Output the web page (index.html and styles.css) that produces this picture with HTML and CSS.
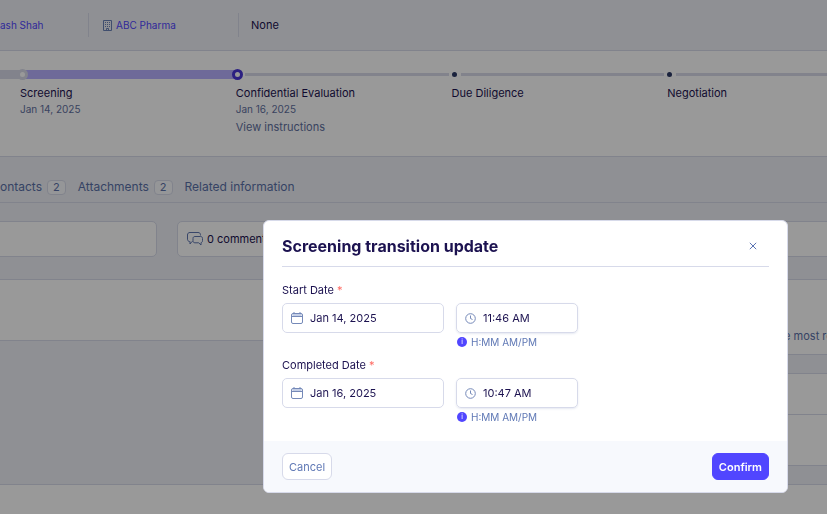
FILE: index.html
```html
<!DOCTYPE html>
<html lang="en">
<head>
  <meta charset="UTF-8"/>
  <meta name="viewport" content="width=device-width, initial-scale=1.0"/>
  <title>Screening transition update</title>
  <link rel="stylesheet" href="styles.css">
</head>
<body>
  <header class="deal-header">
    <div class="deal-item owner"><a href="#">ash Shah</a></div>
    <div class="deal-item company">
      <svg width="9" height="11" viewBox="0 0 9 11" fill="none" stroke="#6b82b8">
        <path d="M.5.5h8v10h-8z"/>
        <path d="M2 2.5h1M4 2.5h1M6 2.5h1M2 4.5h1M4 4.5h1M6 4.5h1M2 6.5h1M4 6.5h1M6 6.5h1"/>
        <path d="M3.5 10.500v-2h2v2"/>
      </svg>
      <a href="#">ABC Pharma</a>
    </div>
    <div class="deal-item">None</div>
  </header>

  <section class="stepper">
    <div class="steps">
      <div class="step done">
        <span class="dot"></span>
        <h4>Screening</h4>
        <p>Jan 14, 2025</p>
      </div>
      <div class="step current">
        <span class="dot"></span>
        <h4>Confidential Evaluation</h4>
        <p>Jan 16, 2025</p>
        <a href="#">View instructions</a>
      </div>
      <div class="step">
        <span class="dot"></span>
        <h4>Due Diligence</h4>
      </div>
      <div class="step">
        <span class="dot"></span>
        <h4>Negotiation</h4>
      </div>
    </div>
  </section>

  <nav class="tabs">
    <a href="#">ontacts <span class="count">2</span></a>
    <a href="#">Attachments <span class="count">2</span></a>
    <a href="#">Related information</a>
  </nav>

  <div class="cards">
    <div class="card"></div>
    <div class="card comments">
      <svg width="16" height="14" viewBox="0 0 16 14" fill="none" stroke="#5f76b0" stroke-linejoin="round">
        <path d="M5.500 9.500H5L3 12V9.500H2.500C1.200 9.300.500 8.500.500 7.200V3C.500 1.400 1.400.500 3 .500h8c1.600 0 2.500.900 2.500 2.200v.800"/>
        <path d="M8 4.500h5.500c1.300 0 2 .700 2 2v2.200c0 1.200-.600 1.800-1.500 2v2.300l-2.300-2.200H8c-1.300 0-2-.700-2-2V6.500c0-1.300.700-2 2-2z"/>
      </svg>
      <span>0 comments</span>
    </div>
  </div>

  <main class="content">
    <div class="left-col">
      <div class="panel"></div>
    </div>
    <div class="right-col">
      <div class="panel summary"><p>the most recent</p></div>
      <div class="panel list">
        <div class="row"></div>
        <div class="row"></div>
      </div>
    </div>
  </main>
  <div class="panel bottom"></div>

  <div class="overlay">
    <form class="modal" role="dialog" aria-labelledby="modalTitle">
      <div class="modal-body">
        <div class="modal-header">
          <h2 id="modalTitle">Screening transition update</h2>
          <button type="button" class="close-btn" aria-label="Close">
            <svg width="8" height="8" viewBox="0 0 8 8" stroke="#5b74b4"><path d="M.8.8l6.400 6.400M7.200.8L.8 7.200"/></svg>
          </button>
        </div>

        <div class="form-group">
          <label for="startDate">Start Date <span class="required">*</span></label>
          <div class="fields">
            <div class="field date">
              <svg width="12" height="12" viewBox="0 0 12 12" fill="none" stroke="#7589b8">
                <path d="M1.500 2h9v2h-9z" fill="#c3cee6" stroke="none"/>
                <rect x=".5" y="1.500" width="11" height="10" rx="1.500"/><path d="M.5 4.500h11M3 0v2M9 0v2"/>
              </svg>
              <input type="text" id="startDate" value="Jan 14, 2025">
            </div>
            <div class="field time">
              <svg width="11" height="11" viewBox="0 0 11 11" fill="none" stroke="#7589b8">
                <circle cx="5.500" cy="5.500" r="4.800"/><path d="M5.500 2.500v3l2 1"/>
              </svg>
              <input type="text" id="startTime" aria-label="Start time" value="11:46 AM">
            </div>
          </div>
          <p class="hint"><span class="info">i</span>H:MM AM/PM</p>
        </div>

        <div class="form-group">
          <label for="endDate">Completed Date <span class="required">*</span></label>
          <div class="fields">
            <div class="field date">
              <svg width="12" height="12" viewBox="0 0 12 12" fill="none" stroke="#7589b8">
                <path d="M1.500 2h9v2h-9z" fill="#c3cee6" stroke="none"/>
                <rect x=".5" y="1.500" width="11" height="10" rx="1.500"/><path d="M.5 4.500h11M3 0v2M9 0v2"/>
              </svg>
              <input type="text" id="endDate" value="Jan 16, 2025">
            </div>
            <div class="field time">
              <svg width="11" height="11" viewBox="0 0 11 11" fill="none" stroke="#7589b8">
                <circle cx="5.500" cy="5.500" r="4.800"/><path d="M5.500 2.500v3l2 1"/>
              </svg>
              <input type="text" id="endTime" aria-label="Completed time" value="10:47 AM">
            </div>
          </div>
          <p class="hint"><span class="info">i</span>H:MM AM/PM</p>
        </div>
      </div>

      <div class="modal-footer">
        <button type="button" class="cancel-btn">Cancel</button>
        <button type="submit" class="confirm-btn">Confirm</button>
      </div>
    </form>
  </div>
</body>
</html>
```
FILE: styles.css
```css
* { box-sizing: border-box; margin: 0; padding: 0; }
body {
  display: flex;
  flex-direction: column;
  min-height: 100vh;
  font-family: Inter, 'Open Sans', sans-serif;
  font-size: 11px;
  line-height: 16px;
  color: #1c1250;
  background-color: #eef1f7;
  overflow-x: hidden;
}
a { text-decoration: none; }
svg { flex: none; }

.deal-header {
  display: flex;
  align-items: center;
  height: 51px;
  border-bottom: 1px solid #d7daea;
}
.deal-item {
  display: flex;
  align-items: center;
  gap: 4px;
  height: 24px;
  padding-left: 12px;
}
.deal-item a {
  font-size: 10px;
  color: #5146ff;
}
.owner {
  width: 89px;
  padding-left: 0;
  border-right: 1px solid #d7daea;
}
.company {
  width: 150px;
  padding-left: 14px;
  border-right: 1px solid #d7daea;
}

.stepper {
  height: 106px;
  padding: 18px 0 0 20px;
  background: #fff;
  border-bottom: 1px solid #d7daea;
  overflow: hidden;
}
.steps {
  display: grid;
  grid-template-columns: repeat(4, 1fr);
  margin-right: -56px;
}
.step {
  position: relative;
  padding-top: 16px;
}
/* track line between two dots */
.step::after {
  content: "";
  position: absolute;
  top: 4px;
  left: 9px;
  right: 3px;
  height: 3px;
  background: #d9dbea;
}
.step.done::before {
  content: "";
  position: absolute;
  top: 1px;
  left: -20px;
  width: 20px;
  height: 9px;
  background: #d9dbea;
}
.step.done::after {
  top: 1px;
  left: 3px;
  right: -2px;
  height: 9px;
  background: #b7b1ff;
}
.dot {
  position: absolute;
  top: 3px;
  left: 0;
  z-index: 1;
  width: 5px;
  height: 5px;
  border-radius: 50%;
  background: #2c3a66;
}
.done .dot, .current .dot {
  top: 0;
  left: -4px;
  width: 11px;
  height: 11px;
  background: #fff;
  border: 3px solid #4a36d8;
}
.done .dot {
  left: -3px;
  border-color: #d9dbea;
}
.step h4 { font-size: 11px; font-weight: 400; }
.step p {
  font-size: 10px;
  color: #5f719f;
}
.step a {
  display: block;
  margin-top: 2px;
  color: #5f719f;
}

.tabs {
  display: flex;
  align-items: center;
  gap: 12px;
  height: 46px;
  padding-top: 15px;
  border-bottom: 1px solid #d7daea;
}
.tabs a {
  display: flex;
  align-items: center;
  gap: 5px;
  font-size: 12px;
  color: #5a70a8;
}
.count {
  padding: 0 5px;
  font-size: 11px;
  line-height: 13px;
  background: #f9fafd;
  border: 1px solid #d7daea;
  border-radius: 4px;
}

.cards {
  display: flex;
  gap: 20px;
  margin: 18px -8px 22px -8px;
}
.card {
  width: 165px;
  height: 36px;
  background: #fff;
  border: 1px solid #d7daea;
  border-radius: 5px;
}
.comments {
  flex: 1;
  display: flex;
  align-items: center;
  gap: 4px;
  padding-left: 9px;
}

.content {
  display: grid;
  grid-template-columns: minmax(0, 2fr) minmax(0, 1fr);
  gap: 20px;
}
.panel {
  height: 62px;
  background: #fff;
  border: 1px solid #d7daea;
  border-width: 1px 0;
}
.summary {
  height: 76px;
  padding: 48px 0 0 216px;
  color: #5a70a8;
  white-space: nowrap;
  overflow: hidden;
}
.list {
  height: 93px;
  margin: 18px 0;
}
.list .row { height: 50px; }
.list .row:first-child {
  height: 41px;
  border-bottom: 1px solid #d7daea;
}
.bottom {
  flex: 1;
  height: auto;
  border-bottom: none;
}

.overlay {
  position: fixed;
  inset: 0;
  z-index: 10;
  display: flex;
  justify-content: flex-end;
  align-items: flex-end;
  padding: 0 39px 21px;
  background: rgba(0,0,0,0.4);
}
.modal {
  width: 525px;
  max-width: 100%;
  background: #fff;
  border: 1px solid #d7daea;
  border-radius: 6px;
  overflow: hidden;
}
.modal-body { padding: 0 18px 17px; }
.modal-header {
  display: flex;
  align-items: center;
  justify-content: space-between;
  height: 46px;
  padding-top: 4px;
  margin-bottom: 15px;
  border-bottom: 1px solid #d7daea;
}
.modal-header h2 {
  font-size: 16px;
  line-height: 20px;
  font-weight: 700;
}
.close-btn {
  display: flex;
  padding: 12px;
  background: none;
  border: none;
  cursor: pointer;
}
.form-group { height: 75px; }
.form-group:last-child { height: 67px; }
.form-group label {
  display: block;
  margin-bottom: 5px;
  font-size: 11px;
}
.required { color: #ff6b63; }
.fields { display: flex; gap: 12px; }
.field {
  display: flex;
  align-items: center;
  gap: 7px;
  height: 30px;
  padding: 0 8px;
  border: 1px solid #d7daea;
  border-radius: 5px;
}
.date { width: 162px; }
.time {
  width: 122px;
  box-shadow: 0 1px 2px rgba(90,110,170,0.15);
}
.field input {
  width: 100%;
  min-width: 0;
  font: inherit;
  color: inherit;
  background: none;
  border: none;
  outline: none;
}
.hint {
  display: flex;
  align-items: center;
  gap: 4px;
  margin: 1px 0 0 175px;
  font-size: 10px;
  color: #5f78b5;
}
.info {
  width: 10px;
  height: 10px;
  border-radius: 50%;
  background: #5146ff;
  color: #fff;
  font-size: 7px;
  line-height: 10px;
  text-align: center;
}
.modal-footer {
  display: flex;
  justify-content: space-between;
  padding: 12px 18px;
  background: #f7f9fd;
}
.modal-footer button {
  height: 27px;
  padding: 0 6px;
  font: inherit;
  border-radius: 6px;
  cursor: pointer;
}
.cancel-btn {
  color: #5f78b5;
  background: #fff;
  border: 1px solid #d7daea;
}
.modal-footer .confirm-btn {
  color: #fff;
  font-weight: 600;
  background: #5146ff;
  border: 1px solid #5146ff;
}
```
